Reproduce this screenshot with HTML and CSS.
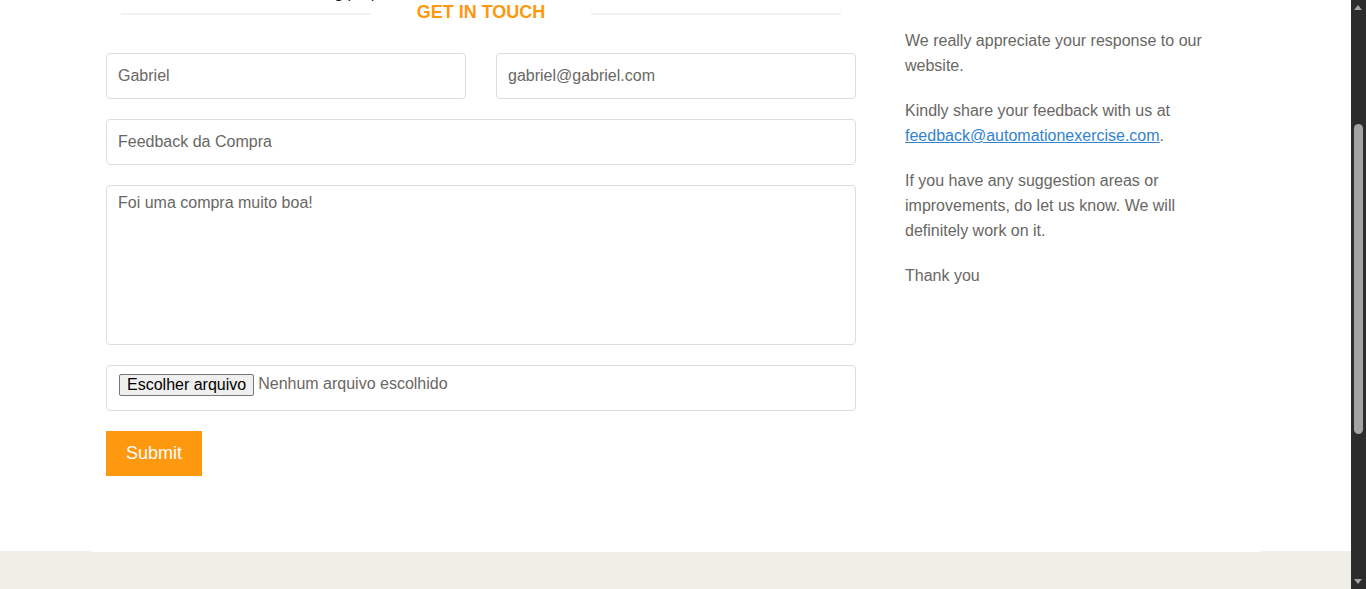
FILE: index.html
```html
<!DOCTYPE html>
<html lang="pt">
<head>
<meta charset="utf-8">
<title>Contact Us</title>
<link rel="stylesheet" href="styles.css">
</head>
<body>
<div class="page">
  <main class="main">
    <div class="container">
      <div class="form-col">
        <div class="note">testing purpose</div>
        <h2 class="title">
          <span class="title-line"></span>
          <span class="title-text">Get In Touch</span>
          <span class="title-line"></span>
        </h2>
        <form class="contact-form">
          <div class="row2">
            <input class="field" type="text" value="Gabriel">
            <input class="field" type="email" value="gabriel@gabriel.com">
          </div>
          <input class="field full" type="text" value="Feedback da Compra">
          <textarea class="field area">Foi uma compra muito boa!</textarea>
          <div class="field file">
            <span class="file-btn">Escolher arquivo</span>
            <span class="file-name">Nenhum arquivo escolhido</span>
          </div>
          <button type="button" class="submit">Submit</button>
        </form>
      </div>
      <aside class="info-col">
        <p>We really appreciate your response to our website.</p>
        <p>Kindly share your feedback with us at <a href="#">feedback@automationexercise.com</a>.</p>
        <p>If you have any suggestion areas or improvements, do let us know. We will definitely work on it.</p>
        <p>Thank you</p>
      </aside>
    </div>
  </main>
  <footer class="footer">
    <div class="footer-edge"></div>
  </footer>
</div>
<div class="scrollbar">
  <span class="arrow up"></span>
  <span class="thumb"></span>
  <span class="arrow down"></span>
</div>
</body>
</html>
```

FILE: styles.css
```css
html, body {
  margin: 0;
  padding: 0;
  overflow: hidden;
  background: #fff;
  font-family: "Liberation Sans", Arial, sans-serif;
}

.page {
  width: 1351px;
  height: 589px;
  display: flex;
  flex-direction: column;
  overflow: hidden;
}

.main {
  flex: 0 0 551px;
  overflow: hidden;
}

.container {
  width: 1170px;
  margin: 0 90px 0 91px;
  padding: 0 15px;
  box-sizing: border-box;
  display: flex;
  gap: 30px;
}

.form-col {
  width: 750px;
  flex: 0 0 750px;
}

.note {
  margin-top: -16px;
  height: 18px;
  line-height: 18px;
  font-size: 16px;
  color: #222;
  padding-left: 190px;
  white-space: nowrap;
}

.title {
  margin: 0;
  height: 20px;
  display: grid;
  grid-template-columns: 250px 1fr 250px;
  padding: 0 15px;
  font-size: 18px;
  line-height: 20px;
  font-weight: 700;
  color: #fe980f;
  text-transform: uppercase;
  text-align: center;
}

.title-line {
  height: 2px;
  margin-top: 11px;
  background: #f2f2f2;
}

.contact-form {
  margin-top: 31px;
  display: flex;
  flex-direction: column;
  gap: 20px;
  align-items: flex-start;
}

.row2 {
  display: flex;
  gap: 30px;
  width: 100%;
}

.field {
  display: block;
  box-sizing: border-box;
  height: 46px;
  width: 100%;
  margin: 0;
  border: 1px solid #dddddd;
  border-radius: 4px;
  padding: 6px 12px 6px 11px;
  font-family: "Liberation Sans", Arial, sans-serif;
  font-size: 16px;
  line-height: 1.42857;
  color: #696763;
  background: #fff;
  outline: none;
}

.row2 .field {
  flex: 1 1 0;
  width: auto;
  min-width: 0;
}

.area {
  height: 160px;
  resize: none;
}

.file {
  display: flex;
  align-items: flex-start;
  padding: 8px 12px 0;
}

.file-btn {
  box-sizing: border-box;
  height: 22px;
  padding: 1px 7px;
  border: 1px solid #767676;
  border-radius: 2px;
  background: #efefef;
  color: #000;
  font-size: 16px;
  line-height: 18px;
  white-space: nowrap;
}

.file-name {
  margin-left: 4px;
  line-height: 20px;
  white-space: nowrap;
}

.submit {
  width: 96px;
  height: 45px;
  border: none;
  border-radius: 0;
  background: #fe980f;
  color: #fff;
  font-family: "Liberation Sans", Arial, sans-serif;
  font-size: 18px;
  padding: 0;
}

.info-col {
  width: 360px;
  flex: 0 0 360px;
  box-sizing: border-box;
  padding: 28px 30px 0 19px;
  color: #696763;
  font-size: 16px;
  line-height: 25px;
}

.info-col p {
  margin: 0 0 20px;
}

.info-col a {
  color: #3483cf;
  text-decoration: underline;
}

.footer {
  flex: 1 1 auto;
  background: #efeee7;
}

.footer-edge {
  width: 1170px;
  height: 1px;
  margin: 0 90px 0 91px;
  background: #fff;
}

.scrollbar {
  position: fixed;
  top: 0;
  right: 0;
  width: 15px;
  height: 589px;
  background: #2c2c2c;
}

.thumb {
  position: absolute;
  left: 3px;
  top: 124px;
  width: 9px;
  height: 310px;
  border-radius: 5px;
  background: #a3a3a3;
}

.arrow {
  position: absolute;
  left: 3px;
  width: 0;
  height: 0;
  border-left: 4.5px solid transparent;
  border-right: 4.5px solid transparent;
}

.arrow.up {
  top: 5px;
  border-bottom: 5px solid #a3a3a3;
}

.arrow.down {
  bottom: 5px;
  border-top: 5px solid #a3a3a3;
}
```
